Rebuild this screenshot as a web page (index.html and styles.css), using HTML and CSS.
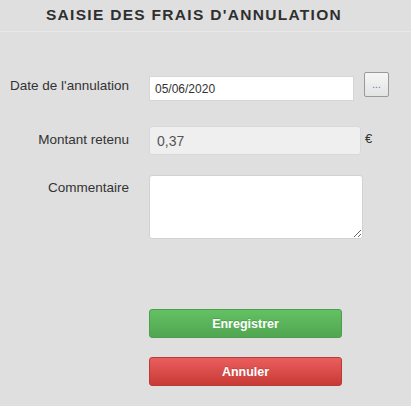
FILE: index.html
```html
<!DOCTYPE html>
<html lang="fr">
<head>
<meta charset="utf-8">
<link rel="stylesheet" href="styles.css">
</head>
<body>
<div class="page">
  <div class="header"><h1 class="title">SAISIE DES FRAIS D'ANNULATION</h1></div>
  <div class="form">
    <div class="row row-date">
      <label class="label">Date de l'annulation</label>
      <input class="input input-date" type="text" value="05/06/2020">
      <button class="btn-dots" type="button">...</button>
    </div>
    <div class="row row-montant">
      <label class="label">Montant retenu</label>
      <input class="input input-montant" type="text" value="0,37" disabled>
      <span class="euro">€</span>
    </div>
    <div class="row row-comment">
      <label class="label">Commentaire</label>
      <textarea class="textarea"></textarea>
    </div>
    <div class="actions">
      <button class="btn btn-save" type="button">Enregistrer</button>
      <button class="btn btn-cancel" type="button">Annuler</button>
    </div>
  </div>
</div>
</body>
</html>
```
FILE: styles.css
```css
html, body { margin: 0; padding: 0; background: #ffffff; }
body { font-family: "Liberation Sans", Arial, sans-serif; color: #333; }
.page {
  width: 411px;
  height: 406px;
  background: #dfdfdf;
  box-sizing: border-box;
}
.header {
  height: 32px;
  border-bottom: 1px solid #e9e9e9;
  box-sizing: border-box;
  display: flex;
  justify-content: center;
  padding-right: 23px;
}
.title {
  margin: 0;
  padding-top: 6px;
  font-size: 15.5px;
  font-weight: bold;
  letter-spacing: 1.3px;
  color: #2f2f2f;
  line-height: 18px;
}
.form { padding-top: 40px; }
.row { display: flex; align-items: flex-start; }
.label {
  width: 129px;
  text-align: right;
  font-size: 13.5px;
  color: #333;
  flex: none;
}
.row-date { height: 32px; }
.row-date .label { padding-top: 6px; }
.input {
  font-family: "Liberation Sans", Arial, sans-serif;
  box-sizing: border-box;
  margin: 0 0 0 20px;
  outline: none;
}
.input-date {
  margin-top: 4px;
  width: 205px;
  height: 25px;
  border: 1px solid #d6d6d6;
  background: #fff;
  font-size: 12px;
  color: #333;
  padding: 0 5px;
}
.btn-dots {
  margin-left: 10px;
  width: 25px;
  height: 25px;
  border: 1px solid #999;
  border-radius: 2px;
  background: linear-gradient(#f6f6f6, #e3e3e3);
  color: #4f7db0;
  font-size: 10px;
  padding: 0;
  box-sizing: border-box;
  font-family: "Liberation Sans", Arial, sans-serif;
}
.row-montant { margin-top: 22px; height: 29px; }
.row-montant .label { padding-top: 6px; }
.input-montant {
  width: 212px;
  height: 29px;
  border: 1px solid #d8d8d8;
  border-radius: 3px;
  background: #efefef;
  color: #555;
  font-size: 14px;
  padding: 0 7px;
}
.euro { margin-left: 4px; font-size: 13px; padding-top: 5px; color: #333; }
.row-comment { margin-top: 20px; }
.row-comment .label { padding-top: 5px; }
.textarea {
  margin: 0 0 0 20px;
  width: 214px;
  height: 64px;
  box-sizing: border-box;
  border: 1px solid #d2d2d2;
  border-radius: 3px;
  background: #fff;
  resize: vertical;
  outline: none;
}
.actions {
  margin-top: 70px;
  padding-left: 149px;
  display: flex;
  flex-direction: column;
  gap: 19px;
}
.btn {
  width: 193px;
  height: 29px;
  border-radius: 3px;
  color: #fff;
  font-weight: bold;
  font-size: 12.5px;
  font-family: "Liberation Sans", Arial, sans-serif;
  padding: 0;
  text-shadow: 0 -1px 0 rgba(0,0,0,0.15);
}
.btn-save {
  background: linear-gradient(#63c163, #51a651);
  border: 1px solid #4c9d4c;
}
.btn-cancel {
  background: linear-gradient(#ea5e5e, #c73a35);
  border: 1px solid #b83a36;
}
```
